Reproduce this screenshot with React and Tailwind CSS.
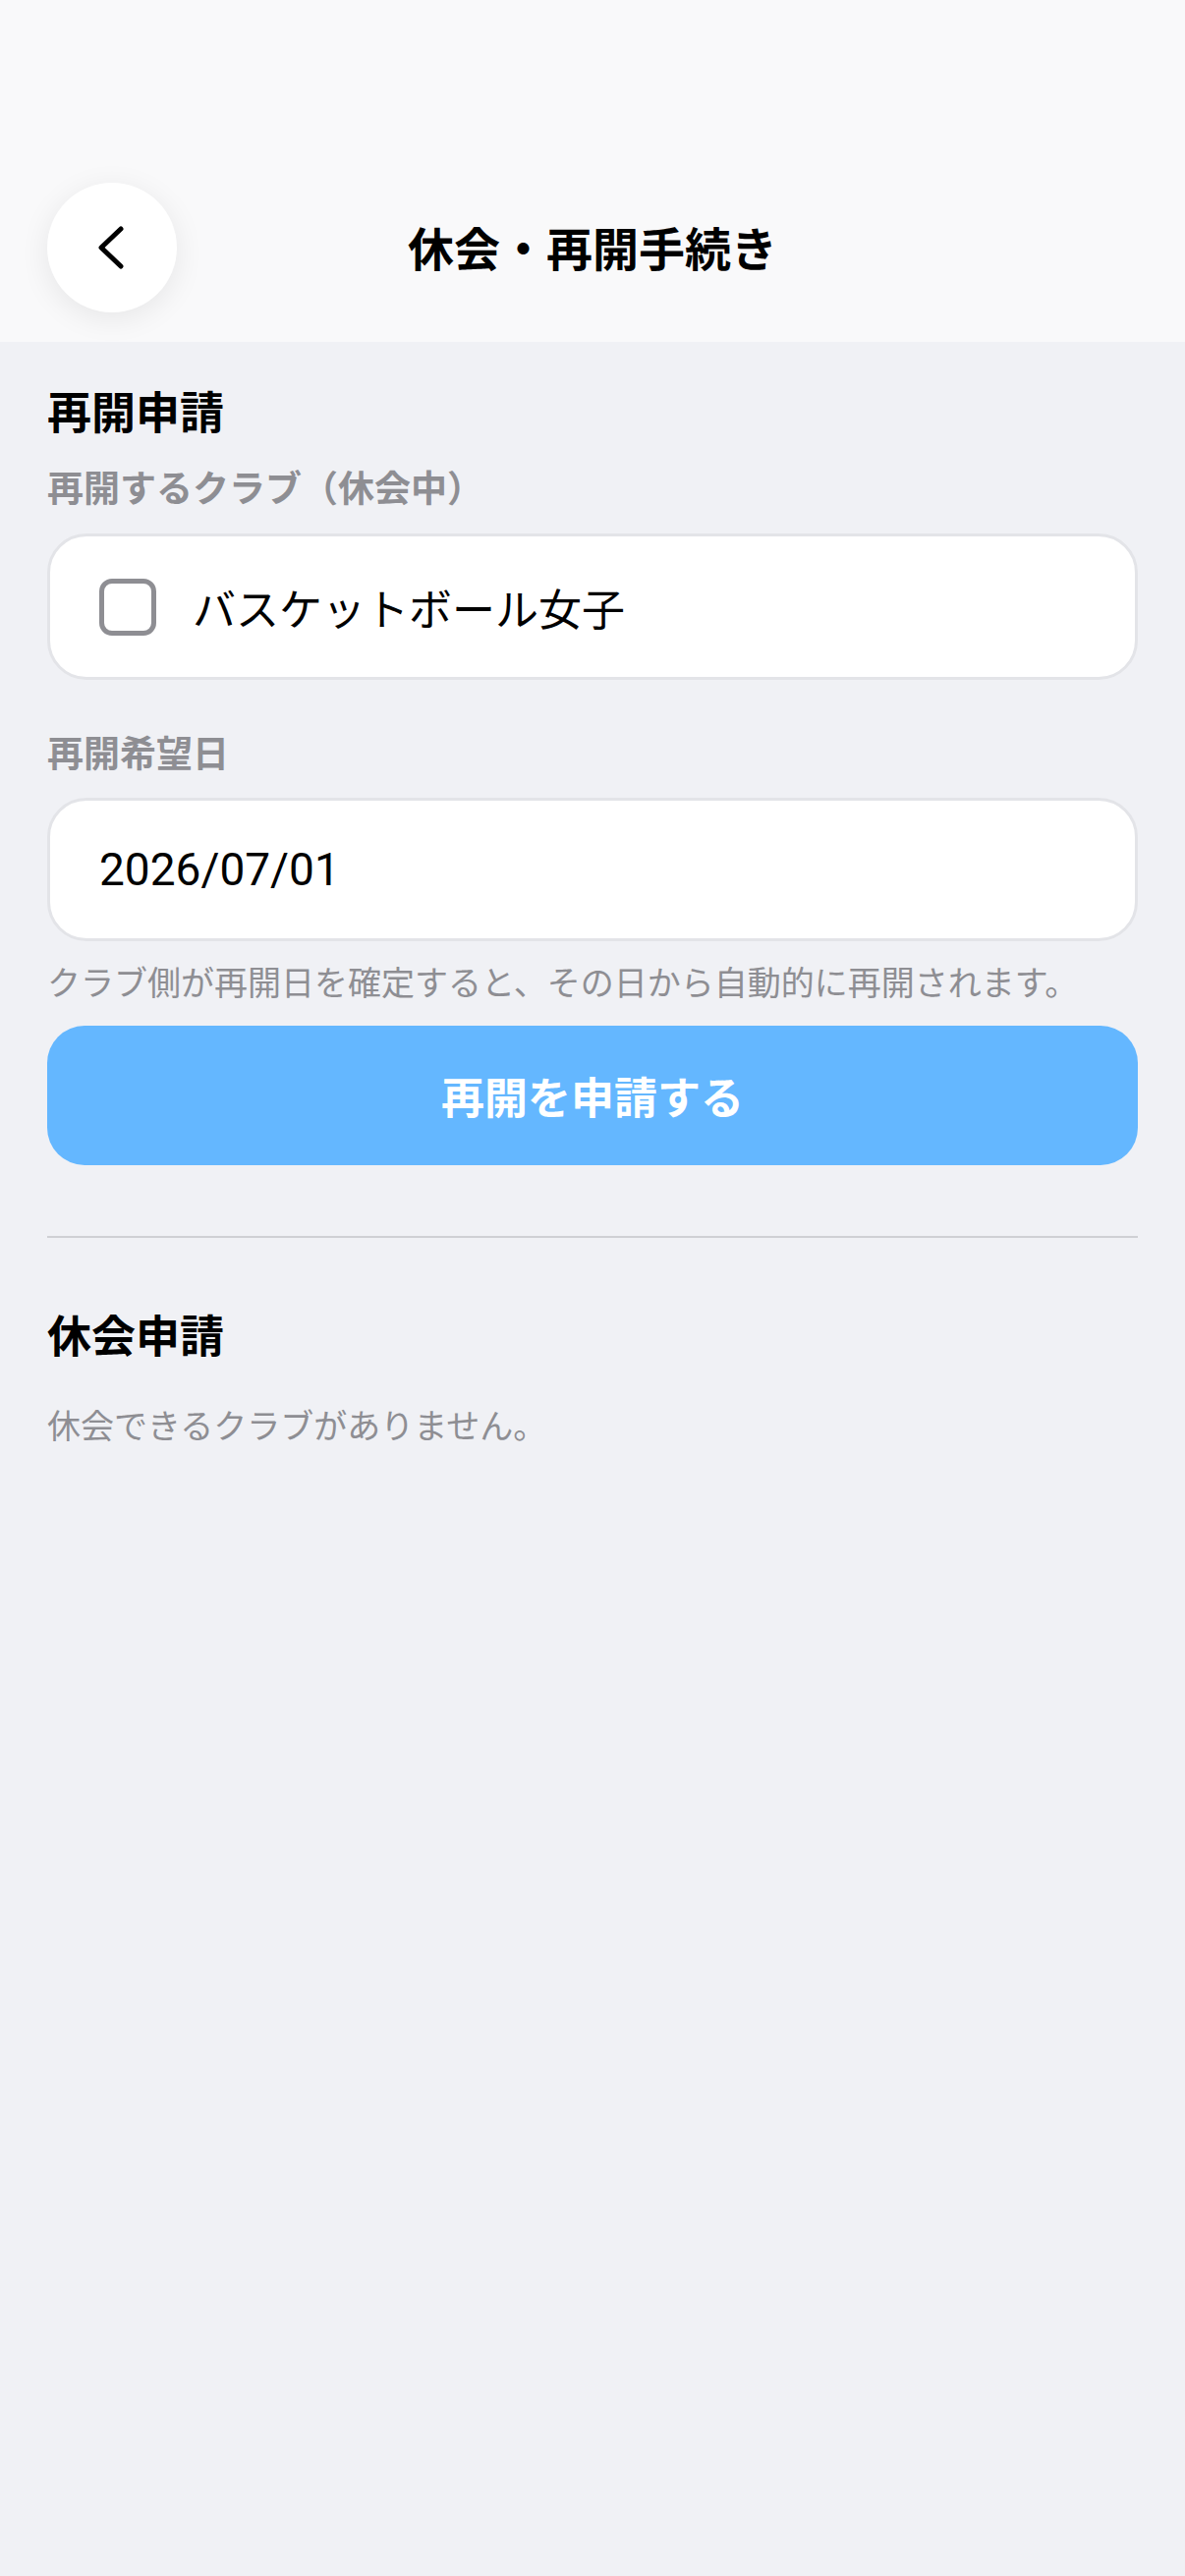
import React from "react";

export default function App() {
  const font = { fontFamily: '"Noto Sans CJK JP", "Noto Sans", sans-serif' };
  return (
    <div className="min-h-[2622px] w-full bg-[#f0f1f5]" style={font}>
      {/* Header */}
      <div className="relative flex h-[348px] items-start justify-center bg-[#f9f9fa]">
        <button className="absolute left-[48px] top-[186px] flex h-[132px] w-[132px] items-center justify-center rounded-full bg-white shadow-[0_6px_30px_rgba(0,0,0,0.08)]">
          <svg width="40" height="50" viewBox="0 0 40 50" fill="none">
            <path d="M29 6 L9 25 L29 44" stroke="#000" strokeWidth="5" strokeLinecap="round" strokeLinejoin="round" />
          </svg>
        </button>
        <h1 className="mt-[226px] text-[47px] font-bold leading-[50px] text-black">
          休会・再開手続き
        </h1>
      </div>

      <div className="px-[48px]">
        <h2 className="mt-[43px] text-[45px] font-bold leading-[54px] text-black">再開申請</h2>
        <div className="mt-[28px] text-[37px] font-semibold leading-[44px] text-[#8e8e93]">
          再開するクラブ（休会中）
        </div>
        <div className="mt-[26px] flex h-[149px] items-center rounded-[40px] border-[3px] border-[#e3e4e8] bg-white pl-[50px]">
          <div className="h-[58px] w-[58px] rounded-[13px] border-[5px] border-[#8e8e93]" />
          <span className="ml-[37px] text-[44px] leading-none text-black">バスケットボール女子</span>
        </div>

        <div className="mt-[51px] text-[37px] font-semibold leading-[44px] text-[#8e8e93]">再開希望日</div>
        <div className="mt-[25px] flex h-[146px] items-center rounded-[40px] border-[3px] border-[#e3e4e8] bg-white pl-[50px]">
          <span className="text-[46px] leading-none text-black" style={{ fontFamily: 'Roboto, "Noto Sans CJK JP", sans-serif' }}>
            2026/07/01
          </span>
        </div>
        <div className="mt-[21px] text-[34px] leading-[40px] text-[#8e8e93]">
          クラブ側が再開日を確定すると、その日から自動的に再開されます。
        </div>
        <button className="mt-[25px] flex h-[142px] w-full items-center justify-center rounded-[38px] bg-[#64b7ff] text-[44px] font-bold text-white">
          再開を申請する
        </button>

        <div className="mt-[72px] h-[2px] w-full bg-[#cfd0d4]" />

        <h2 className="mt-[71px] text-[45px] font-bold leading-[54px] text-black">休会申請</h2>
        <div className="mt-[45px] text-[34px] leading-[40px] text-[#8e8e93]">休会できるクラブがありません。</div>
      </div>
    </div>
  );
}
